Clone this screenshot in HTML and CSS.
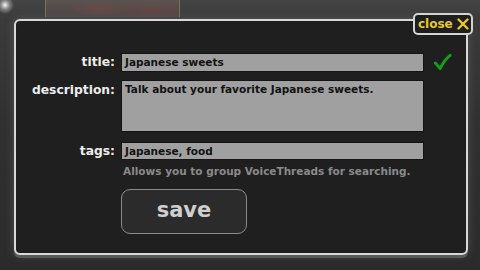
FILE: index.html
```html
<!DOCTYPE html>
<html>
<head>
<meta charset="utf-8">
<link rel="stylesheet" href="styles.css">
</head>
<body>
<div class="screen">
  <div class="backdrop">
    <div class="thumb"></div>
  </div>
  <span class="flare"></span>
  <div class="panel">
    <button class="close">close <svg class="x" viewBox="0 0 12 12" width="12" height="12"><path d="M1.5 1.5 L10.5 10.5 M10.5 1.5 L1.5 10.5" stroke="#e8c72a" stroke-width="2.4" stroke-linecap="round" fill="none"/></svg></button>
    <div class="form">
      <label class="lbl lbl-title">title:</label>
      <div class="field field-title">Japanese sweets</div>
      <svg class="check" viewBox="0 0 20 20" width="19" height="19"><path d="M2.5 10.5 L7.5 16.5 C10 11 13 6.5 18 2.5" stroke="#14a014" stroke-width="3" fill="none" stroke-linecap="round" stroke-linejoin="round"/></svg>

      <label class="lbl lbl-desc">description:</label>
      <div class="field field-desc">Talk about your favorite Japanese sweets.</div>
      <span></span>

      <label class="lbl lbl-tags">tags:</label>
      <div class="field field-tags">Japanese, food</div>
      <span></span>

      <span></span>
      <div class="hint">Allows you to group VoiceThreads for searching.</div>
      <span></span>

      <span></span>
      <div class="actions"><button class="save">save</button></div>
      <span></span>
    </div>
  </div>
</div>
</body>
</html>
```
FILE: styles.css
```css
html, body {
  margin: 0;
  padding: 0;
}
body {
  width: 480px;
  height: 270px;
  overflow: hidden;
  font-family: "DejaVu Sans", Verdana, sans-serif;
}
.screen {
  position: relative;
  width: 480px;
  height: 270px;
  background: linear-gradient(180deg, #444444 0px, #3b3b3b 20px, #313131 120px, #2b2b2b 270px);
  overflow: hidden;
}
.backdrop {
  height: 19px;
  display: flex;
  padding-left: 45px;
}
.thumb {
  width: 133px;
  height: 17px;
  border-left: 1px solid #7a7448;
  border-right: 1px solid #7a7448;
  background:
    radial-gradient(ellipse 30px 8px at 40% 50%, rgba(140,70,70,0.35), rgba(0,0,0,0) 100%),
    radial-gradient(ellipse 40px 8px at 80% 60%, rgba(130,60,60,0.35), rgba(0,0,0,0) 100%),
    linear-gradient(180deg, #5a5350 0px, #4e4646 17px);
}
.flare {
  position: absolute;
  left: -4px;
  top: -4px;
  width: 18px;
  height: 18px;
  background: radial-gradient(circle, rgba(255,255,255,0.95) 0, rgba(255,255,255,0.35) 35%, rgba(255,255,255,0) 70%);
}
.panel {
  position: relative;
  margin-left: 14px;
  width: 450px;
  height: 232px;
  background: #1f1f1f;
  border: 2px solid #d8d8d8;
  border-radius: 6px;
  box-shadow: 0 3px 0 #5a5a5a, 0 0 8px rgba(110,110,110,0.55);
}
.close {
  position: absolute;
  right: -7px;
  top: -8px;
  width: 60px;
  height: 22px;
  box-sizing: border-box;
  padding: 0 0 0 3px;
  display: flex;
  align-items: center;
  gap: 4px;
  background: #1e1e1e;
  border: 2px solid #d4d4d4;
  border-radius: 5px;
  color: #e8c72a;
  font-family: "DejaVu Sans", Verdana, sans-serif;
  font-weight: bold;
  font-size: 12px;
  line-height: 1;
}
.x {
  width: 12px;
  height: 12px;
}
.form {
  display: grid;
  grid-template-columns: 99px 303px 30px;
  column-gap: 6px;
  padding-top: 32px;
}
.lbl {
  text-align: right;
  color: #ececec;
  font-weight: bold;
  font-size: 12.3px;
  line-height: 19px;
}
.lbl-desc {
  line-height: 16px;
  padding-top: 2px;
}
.field {
  box-sizing: border-box;
  background: #a0a0a0;
  border: 1px solid #141414;
  color: #121212;
  font-weight: bold;
  font-size: 10.5px;
  padding: 0 3px;
  line-height: 17px;
}
.field-title {
  height: 19px;
}
.check {
  display: block;
  margin-left: 3px;
  align-self: start;
}
.field-desc {
  height: 52px;
  margin-top: 8px;
  line-height: 15px;
  padding-top: 1px;
}
.lbl-desc {
  margin-top: 8px;
}
.field-tags, .lbl-tags {
  margin-top: 10px;
}
.field-tags {
  height: 18px;
  line-height: 16px;
}
.lbl-tags {
  line-height: 18px;
}
.hint {
  color: #8a8a8a;
  font-weight: bold;
  font-size: 10.5px;
  padding-left: 2px;
  margin-top: 5px;
  line-height: 12px;
  white-space: nowrap;
}
.actions {
  margin-top: 12px;
}
.save {
  width: 126px;
  height: 45px;
  box-sizing: border-box;
  background: #2b2b2b;
  border: 1.5px solid #8a8a8a;
  border-radius: 9px;
  color: #cfcfcf;
  font-family: "DejaVu Sans", Verdana, sans-serif;
  font-weight: bold;
  font-size: 21px;
  padding: 0 0 3px;
}
```
